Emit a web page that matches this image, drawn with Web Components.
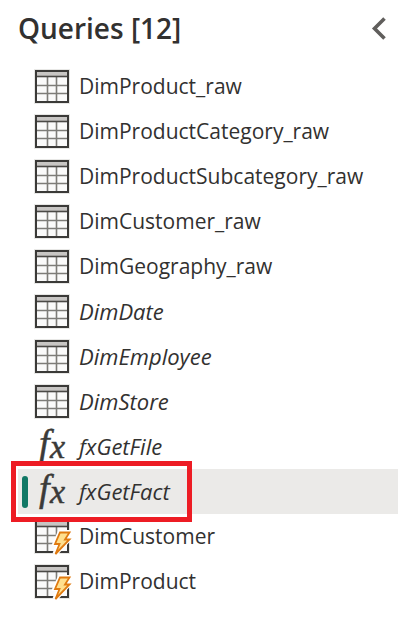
<!DOCTYPE html>
<html lang="en">
<head>
<meta charset="utf-8">
<meta name="viewport" content="width=device-width, initial-scale=1">
<title>Queries</title>
<style>
  body { margin: 0; background: #fff; color: #323130; font-family: "Open Sans", "Noto Sans", sans-serif; }
</style>
</head>
<body>
<queries-pane>
  <query-item kind="table">DimProduct_raw</query-item>
  <query-item kind="table">DimProductCategory_raw</query-item>
  <query-item kind="table">DimProductSubcategory_raw</query-item>
  <query-item kind="table">DimCustomer_raw</query-item>
  <query-item kind="table">DimGeography_raw</query-item>
  <query-item kind="table" unloaded>DimDate</query-item>
  <query-item kind="table" unloaded>DimEmployee</query-item>
  <query-item kind="table" unloaded>DimStore</query-item>
  <query-item kind="function" unloaded>fxGetFile</query-item>
  <query-item kind="function" unloaded selected marked>fxGetFact</query-item>
  <query-item kind="live">DimCustomer</query-item>
  <query-item kind="live">DimProduct</query-item>
</queries-pane>
<script>
const table = `
  <rect x="0" y="1" width="36" height="35" fill="#e8e8e6"/>
  <rect x="2" y="3" width="32" height="31" fill="#fafafa"/>
  <rect x="2" y="3" width="32" height="5" fill="#c8c6c4"/>
  <path d="M13.500 8v26M22.500 8v26M2 17.500h32M2 25.500h32" stroke="#7d7c78" stroke-width="1.6" fill="none"/>
  <path d="M2 8.500h32" stroke="#4a4946" stroke-width="1.6"/>
  <rect x="2" y="3" width="32" height="31" fill="none" stroke="#3b3a38" stroke-width="2"/>`;
const bolt = `
  <path d="M26 14.500h10l-4.500 6.500h3.500L21 36l4-10.500h-4z" fill="#fff" stroke="#fff" stroke-width="5"/>
  <path d="M26 14.500h9.500l-4.500 7h4.500L21.500 36l4-10h-4.500z" fill="#ffdf8e" stroke="#e07a10" stroke-width="1.800"/>`;
const icons = {
  table,
  live: table + bolt,
  function: `<text font-family="Liberation Serif, serif" font-style="italic" fill="#3b3a38" stroke="#3b3a38" stroke-width="0.5"><tspan x="5" y="28" font-size="38">f</tspan><tspan x="16" y="30" font-size="34">x</tspan></text>`
};

customElements.define('query-icon', class extends HTMLElement {
  connectedCallback() {
    const root = this.attachShadow({ mode: 'open' });
    root.innerHTML = `<style>
      :host { display: block; flex: none; width: 36px; height: 36px; }
      svg { display: block; overflow: visible; }
    </style><svg width="36" height="36" viewBox="0 0 36 36" aria-hidden="true">${icons[this.getAttribute('kind')]}</svg>`;
  }
});

customElements.define('query-item', class extends HTMLElement {
  connectedCallback() {
    const root = this.attachShadow({ mode: 'open' });
    root.innerHTML = `<style>
      :host { display: block; position: relative; }
      button {
        display: flex; align-items: center; gap: 9px; width: 100%; height: 45px;
        padding: 0 0 1px 16px; border: 0; background: none; color: inherit;
        font: inherit; font-size: 21px; line-height: 31px; text-align: left; white-space: nowrap;
      }
      :host([unloaded]) button { font-style: italic; font-size: 22px; line-height: 30px; }
      :host([selected]) button { background: #ebeae8; }
      :host([selected]) button::before {
        content: ""; position: absolute; left: 4px; top: 7px; bottom: 6px;
        width: 6px; border-radius: 3px; background: #117865;
      }
      :host([marked]) { z-index: 1; }
      :host([marked])::after {
        content: ""; position: absolute; left: -7px; top: -8px; bottom: -8px; width: 171px;
        border: 5px solid #ed1c24; pointer-events: none;
      }
      :host([marked])::before {
        content: ""; position: absolute; z-index: -1; left: -2px; top: -3px; bottom: -3px; width: 171px;
        background: #fff;
      }
    </style>
    <button type="button" ${this.hasAttribute('selected') ? 'aria-current="true"' : ''}>
      <query-icon kind="${this.getAttribute('kind')}"></query-icon><span><slot></slot></span>
    </button>`;
  }
});

customElements.define('queries-pane', class extends HTMLElement {
  connectedCallback() {
    const root = this.attachShadow({ mode: 'open' });
    root.innerHTML = `<style>
      :host { display: block; padding: 0 16px 13px 18px; }
      header { display: flex; align-items: center; justify-content: space-between; height: 56px; margin-bottom: 8px; }
      h1 { margin: 0; font-size: 28px; line-height: 36px; font-weight: 600; }
      .collapse { display: flex; padding: 8px; border: 0; background: none; color: #605e5c; }
      svg { display: block; }
    </style>
    <header>
      <h1>Queries [${this.children.length}]</h1>
      <button class="collapse" type="button" aria-label="Collapse queries pane">
        <svg width="24" height="24" viewBox="0 0 24 24"><path d="M18.500 2.500L8.500 12.500l10 10" fill="none" stroke="currentColor" stroke-width="3.600"/></svg>
      </button>
    </header>
    <nav aria-label="Queries"><slot></slot></nav>`;
  }
});
</script>
</body>
</html>
